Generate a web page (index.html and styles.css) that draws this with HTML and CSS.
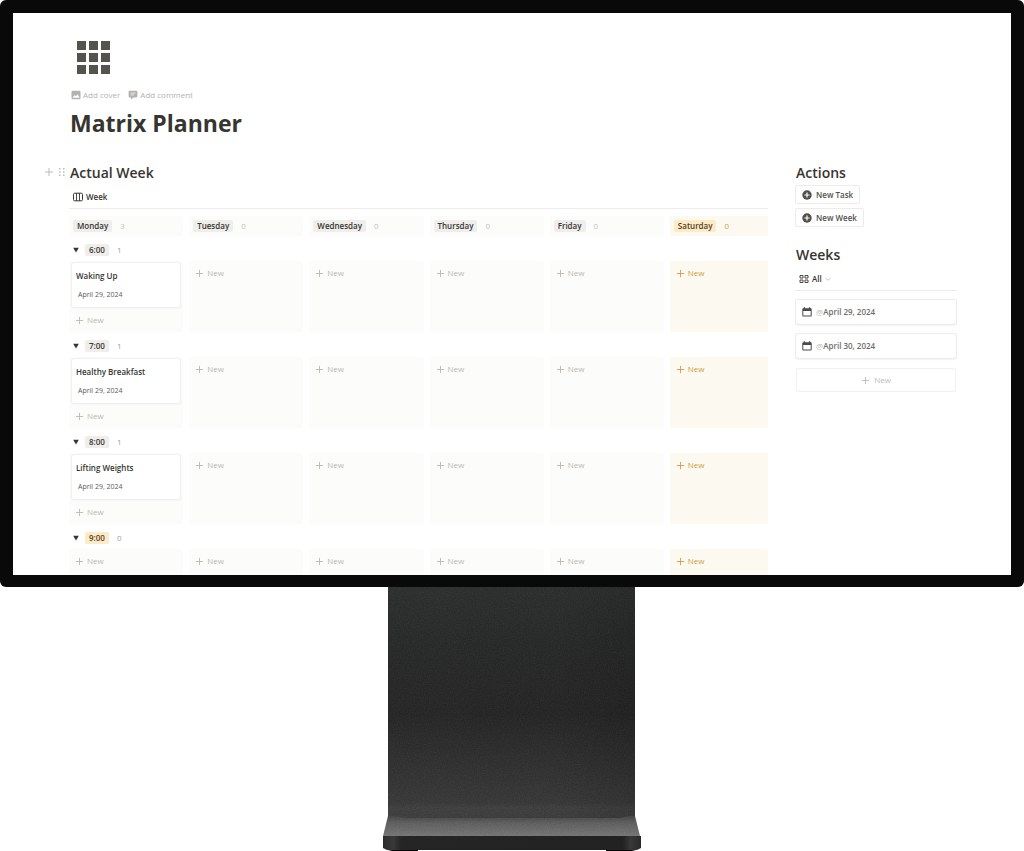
FILE: index.html
```
<!DOCTYPE html>
<html lang="en">
<head>
<meta charset="utf-8">
<meta name="viewport" content="width=device-width, initial-scale=1">
<title>Matrix Planner</title>
<link rel="stylesheet" href="styles.css">
</head>
<body>
<svg class="defs" width="0" height="0" aria-hidden="true">
  <symbol id="plus" viewBox="0 0 10 10"><path d="M5 1v8M1 5h8" fill="none" stroke="currentColor" stroke-width="1"/></symbol>
  <symbol id="circle-plus" viewBox="0 0 10 10"><circle cx="5" cy="5" r="4.7" fill="currentColor"/><path d="M5 2.4v5.2M2.4 5h5.2" stroke="#fff" stroke-width="1.2"/></symbol>
  <symbol id="calendar" viewBox="0 0 10 10"><path fill="currentColor" fill-rule="evenodd" d="M1.7.3h1.4v1h3.8v-1h1.4v1h.5c.5 0 .9.4.9.9v6.3c0 .5-.4.9-.9.9H1.2c-.5 0-.9-.4-.9-.9V2.200c0-.5.4-.9.9-.9h.5zM1.300 4v4.400h7.400V4z"/></symbol>
  <symbol id="triangle" viewBox="0 0 6 6"><path d="M.2.8h5.600L3 5.600z" fill="currentColor"/></symbol>
</svg>
<div class="monitor">
  <main class="screen">
    <header class="page-head">
      <svg class="page-icon" viewBox="0 0 33 33" aria-hidden="true"><path fill="#55534e" d="M0 0h9v9H0zM12 0h9v9h-9zM24 0h9v9h-9zM0 12h9v9H0zM12 12h9v9h-9zM24 12h9v9h-9zM0 24h9v9H0zM12 24h9v9h-9zM24 24h9v9h-9z"/></svg>
      <div class="page-tools">
        <button class="tool" type="button"><svg class="icon" viewBox="0 0 10 10" aria-hidden="true"><rect x=".5" y=".7" width="9" height="8.600" rx="1.200" fill="currentColor"/><path d="M1.500 7.700 3.700 4.900 5 6.300 6.600 4.200 8.600 7.700z" fill="#fff"/></svg>Add cover</button>
        <button class="tool" type="button"><svg class="icon" viewBox="0 0 10 10" aria-hidden="true"><path d="M1.800.8h6.400c.7 0 1.200.5 1.200 1.200v4.200c0 .7-.5 1.200-1.200 1.200H5.300L3 9.400v-2H1.800C1.100 7.400.6 6.900.6 6.200V2c0-.7.5-1.200 1.200-1.200z" fill="currentColor"/><path d="M2.600 3.100h4.800M2.600 4.900h3.400" stroke="#fff" stroke-width=".7"/></svg>Add comment</button>
      </div>
      <h1>Matrix Planner</h1>
    </header>
    <div class="columns">
      <section class="week">
        <div class="heading-row">
          <button class="handle" type="button" aria-label="Add block"><svg class="icon" aria-hidden="true"><use href="#plus"/></svg></button>
          <button class="handle" type="button" aria-label="Drag block"><svg class="grip" viewBox="0 0 6 10" aria-hidden="true"><path d="M0 1h1.500v1.500H0zM4 1h1.500v1.500H4zM0 4.200h1.500v1.500H0zM4 4.200h1.500v1.500H4zM0 7.400h1.500v1.500H0zM4 7.400h1.500v1.500H4z" fill="currentColor"/></svg></button>
          <h2>Actual Week</h2>
        </div>
        <div class="tabs"><button class="tab" type="button"><svg class="icon" viewBox="0 0 10 10" aria-hidden="true"><rect x=".5" y="1.200" width="9" height="7.600" rx="1.200" fill="none" stroke="currentColor"/><path d="M3.500 1.200v7.600M6.500 1.200v7.600" stroke="currentColor" stroke-width=".9"/></svg>Week</button></div>
        <div class="board">
          <div class="lane">
            <div class="day"><span class="tag">Monday</span><span class="count">3</span></div>
            <div class="day"><span class="tag">Tuesday</span><span class="count">0</span></div>
            <div class="day"><span class="tag">Wednesday</span><span class="count">0</span></div>
            <div class="day"><span class="tag">Thursday</span><span class="count">0</span></div>
            <div class="day"><span class="tag">Friday</span><span class="count">0</span></div>
            <div class="day gold"><span class="tag">Saturday</span><span class="count">0</span></div>
          </div>

          <div class="group"><button class="toggle" type="button" aria-label="Collapse 6:00"><svg class="tri" aria-hidden="true"><use href="#triangle"/></svg></button><span class="tag">6:00</span><span class="count">1</span></div>
          <div class="lane">
            <div class="cell"><article class="card"><h3>Waking Up</h3><p>April 29, 2024</p></article><button class="new" type="button"><svg class="icon" aria-hidden="true"><use href="#plus"/></svg>New</button></div>
            <div class="cell"><button class="new" type="button"><svg class="icon" aria-hidden="true"><use href="#plus"/></svg>New</button></div>
            <div class="cell"><button class="new" type="button"><svg class="icon" aria-hidden="true"><use href="#plus"/></svg>New</button></div>
            <div class="cell"><button class="new" type="button"><svg class="icon" aria-hidden="true"><use href="#plus"/></svg>New</button></div>
            <div class="cell"><button class="new" type="button"><svg class="icon" aria-hidden="true"><use href="#plus"/></svg>New</button></div>
            <div class="cell gold"><button class="new" type="button"><svg class="icon" aria-hidden="true"><use href="#plus"/></svg>New</button></div>
          </div>

          <div class="group"><button class="toggle" type="button" aria-label="Collapse 7:00"><svg class="tri" aria-hidden="true"><use href="#triangle"/></svg></button><span class="tag">7:00</span><span class="count">1</span></div>
          <div class="lane">
            <div class="cell"><article class="card"><h3>Healthy Breakfast</h3><p>April 29, 2024</p></article><button class="new" type="button"><svg class="icon" aria-hidden="true"><use href="#plus"/></svg>New</button></div>
            <div class="cell"><button class="new" type="button"><svg class="icon" aria-hidden="true"><use href="#plus"/></svg>New</button></div>
            <div class="cell"><button class="new" type="button"><svg class="icon" aria-hidden="true"><use href="#plus"/></svg>New</button></div>
            <div class="cell"><button class="new" type="button"><svg class="icon" aria-hidden="true"><use href="#plus"/></svg>New</button></div>
            <div class="cell"><button class="new" type="button"><svg class="icon" aria-hidden="true"><use href="#plus"/></svg>New</button></div>
            <div class="cell gold"><button class="new" type="button"><svg class="icon" aria-hidden="true"><use href="#plus"/></svg>New</button></div>
          </div>

          <div class="group"><button class="toggle" type="button" aria-label="Collapse 8:00"><svg class="tri" aria-hidden="true"><use href="#triangle"/></svg></button><span class="tag">8:00</span><span class="count">1</span></div>
          <div class="lane">
            <div class="cell"><article class="card"><h3>Lifting Weights</h3><p>April 29, 2024</p></article><button class="new" type="button"><svg class="icon" aria-hidden="true"><use href="#plus"/></svg>New</button></div>
            <div class="cell"><button class="new" type="button"><svg class="icon" aria-hidden="true"><use href="#plus"/></svg>New</button></div>
            <div class="cell"><button class="new" type="button"><svg class="icon" aria-hidden="true"><use href="#plus"/></svg>New</button></div>
            <div class="cell"><button class="new" type="button"><svg class="icon" aria-hidden="true"><use href="#plus"/></svg>New</button></div>
            <div class="cell"><button class="new" type="button"><svg class="icon" aria-hidden="true"><use href="#plus"/></svg>New</button></div>
            <div class="cell gold"><button class="new" type="button"><svg class="icon" aria-hidden="true"><use href="#plus"/></svg>New</button></div>
          </div>

          <div class="group amber"><button class="toggle" type="button" aria-label="Collapse 9:00"><svg class="tri" aria-hidden="true"><use href="#triangle"/></svg></button><span class="tag">9:00</span><span class="count">0</span></div>
          <div class="lane last">
            <div class="cell"><button class="new" type="button"><svg class="icon" aria-hidden="true"><use href="#plus"/></svg>New</button></div>
            <div class="cell"><button class="new" type="button"><svg class="icon" aria-hidden="true"><use href="#plus"/></svg>New</button></div>
            <div class="cell"><button class="new" type="button"><svg class="icon" aria-hidden="true"><use href="#plus"/></svg>New</button></div>
            <div class="cell"><button class="new" type="button"><svg class="icon" aria-hidden="true"><use href="#plus"/></svg>New</button></div>
            <div class="cell"><button class="new" type="button"><svg class="icon" aria-hidden="true"><use href="#plus"/></svg>New</button></div>
            <div class="cell gold"><button class="new" type="button"><svg class="icon" aria-hidden="true"><use href="#plus"/></svg>New</button></div>
          </div>
        </div>
      </section>

      <aside class="side">
        <h2>Actions</h2>
        <div class="actions">
          <button class="action" type="button"><svg class="icon" aria-hidden="true"><use href="#circle-plus"/></svg>New Task</button>
          <button class="action" type="button"><svg class="icon" aria-hidden="true"><use href="#circle-plus"/></svg>New Week</button>
        </div>
        <h2>Weeks</h2>
        <div class="tabs"><button class="tab" type="button"><svg class="icon" viewBox="0 0 10 10" aria-hidden="true"><path d="M1 1.500h3v2.500H1zM6 1.500h3v2.500H6zM1 6h3v2.500H1zM6 6h3v2.500H6z" fill="none" stroke="currentColor" stroke-width=".9" stroke-linejoin="round"/></svg>All<svg class="chevron" viewBox="0 0 6 6" aria-hidden="true"><path d="M.5 2 3 4.300 5.500 2" fill="none" stroke="#b5b4b1" stroke-width=".8"/></svg></button></div>
        <div class="entries">
          <a class="entry" href="#week-29"><svg class="icon" aria-hidden="true"><use href="#calendar"/></svg><span><span class="at">@</span>April 29, 2024</span></a>
          <a class="entry" href="#week-30"><svg class="icon" aria-hidden="true"><use href="#calendar"/></svg><span><span class="at">@</span>April 30, 2024</span></a>
          <button class="entry-new" type="button"><svg class="icon" aria-hidden="true"><use href="#plus"/></svg>New</button>
        </div>
      </aside>
    </div>
  </main>
</div>
<svg class="stand" viewBox="0 0 260 264" preserveAspectRatio="none" aria-hidden="true">
  <defs>
    <linearGradient id="neck" x1="0" y1="0" x2="0" y2="1">
      <stop offset="0" stop-color="#2f3030"/><stop offset=".25" stop-color="#292a2a"/><stop offset=".55" stop-color="#272727"/><stop offset=".8" stop-color="#343434"/><stop offset=".93" stop-color="#3b3b3b"/><stop offset=".95" stop-color="#424242"/><stop offset="1" stop-color="#404040"/>
    </linearGradient>
    <linearGradient id="shade" x1="0" y1="0" x2="1" y2="0">
      <stop offset="0" stop-color="#000" stop-opacity="0"/><stop offset=".7" stop-color="#000" stop-opacity=".03"/><stop offset="1" stop-color="#000" stop-opacity=".14"/>
    </linearGradient>
    <linearGradient id="foot" x1="0" y1="0" x2="0" y2="1">
      <stop offset="0" stop-color="#464646"/><stop offset=".35" stop-color="#636363"/><stop offset="1" stop-color="#7b7b7b"/>
    </linearGradient>
    <linearGradient id="edge" x1="0" y1="0" x2="1" y2="0">
      <stop offset="0" stop-color="#2c2c2c"/><stop offset=".04" stop-color="#383838"/><stop offset=".07" stop-color="#252525"/><stop offset=".93" stop-color="#222"/><stop offset=".96" stop-color="#383838"/><stop offset="1" stop-color="#292929"/>
    </linearGradient>
    <filter id="grain" x="0" y="0" width="1" height="1" color-interpolation-filters="sRGB"><feTurbulence type="fractalNoise" baseFrequency=".8" numOctaves="2"/><feColorMatrix values="1 0 0 0 -.25  1 0 0 0 -.25  1 0 0 0 -.25  0 0 0 0 1"/><feComposite in2="SourceGraphic" operator="in"/></filter>
  </defs>
  <path d="M6 0h247v232H6z" fill="url(#neck)"/>
  <path d="M6 0h247v232H6z" fill="url(#shade)"/>
  <path d="M6 229Q12 228 22 231H238Q248 228 253 229L258 249H1z" fill="url(#foot)"/>
  <path d="M6 0h247v229l5 20H1l5-20z" filter="url(#grain)" opacity=".07"/>
  <path d="M1 249h258v12l-4 2H5l-4-2z" fill="url(#edge)"/>
  <path d="M6 263h30v1H10zM224 263h30l-4 1h-26z" fill="#080606"/>
</svg>
</body>
</html>
```
FILE: styles.css
```
* { box-sizing: border-box; }
body {
  margin: 0;
  background: #fff;
  color: #37352f;
  font-family: "Open Sans", "Noto Sans", sans-serif;
  font-size: 8px;
  line-height: 12px;
}
h1, h2, h3, p { margin: 0; }
button {
  margin: 0;
  padding: 0;
  border: 0;
  background: none;
  color: inherit;
  font: inherit;
  cursor: pointer;
}
.defs { position: absolute; }
.icon { width: 10px; height: 10px; flex: none; }

.monitor {
  padding: 13px 13px 12px;
  background: #090909;
  border-radius: 6px;
}
.screen {
  padding: 28px 54px 0 56px;
  background: #fff;
  overflow: hidden;
}
.page-icon { display: block; width: 33px; height: 33px; margin-left: 8px; }
.page-tools { display: flex; gap: 8px; margin: 15px 0 0 2px; color: #b3b2af; }
.tool { display: flex; align-items: center; gap: 2px; }
h1 { margin-top: 6px; padding-left: 1px; font-size: 23px; line-height: 32px; font-weight: 700; }

.columns { display: flex; gap: 27px; margin-top: 24px; }
.week { flex: 1; min-width: 0; }
.side { flex: 0 0 162px; }
h2 { padding-left: 1px; font-size: 14px; line-height: 20px; font-weight: 600; }
.heading-row { display: flex; align-items: center; margin-left: -25px; }
.handle { display: flex; padding-bottom: 2px; color: #bcbbb8; }
.handle + .handle { margin: 0 4px 0 5px; }
.grip { width: 6px; height: 10px; }

.tabs { display: flex; height: 26px; padding-top: 2px; align-items: center; border-bottom: 1px solid #ececeb; }
.tab { display: flex; align-items: center; gap: 3px; padding-left: 4px; font-weight: 600; }
.chevron { width: 6px; height: 6px; }

.board { padding-top: 7px; }
.lane { display: grid; grid-template-columns: repeat(5, 114fr) 98fr; gap: 6px; }
.day, .cell { background: #fcfcfb; border-radius: 2px; }
.day { display: flex; align-items: center; gap: 8px; height: 20px; padding-left: 4px; }
.tag { padding: 0 4px; border-radius: 2px; background: #efeeec; font-weight: 600; }
.count { color: #a09f9c; }
.day .count { color: #c5c4c2; }
.day.gold, .cell.gold { background: #fcf9f1; border-radius: 2px 0 0 2px; }
.gold .tag, .amber .tag { background: #fdebc8; color: #51401f; }
.day.gold .count, .gold .new { color: #d19d46; }

.group { display: flex; align-items: center; gap: 8px; height: 25px; padding: 2px 0 0 4px; }
.toggle { display: flex; }
.group .toggle { margin-right: -2px; }
.tri { width: 6px; height: 6px; }
.cell { min-height: 71px; padding: 2px 3px; }
.card {
  padding: 7px 5px 6px 4px;
  border-radius: 2px;
  background: #fff;
  box-shadow: 0 0 0 1px #f0f0ef, 0 1px 2px #e4e4e3;
}
.card h3 { font-size: 8px; line-height: 12px; font-weight: 600; }
.card p { margin-top: 7px; padding-left: 2px; font-size: 7px; line-height: 12px; color: #5c5a55; }
.new { display: flex; align-items: center; gap: 3px; padding: 4px 3px; color: #bab9b6; }
.card + .new { padding-top: 7px; }
.last .cell { min-height: 26px; border-radius: 2px 2px 0 0; }
.new .icon, .entry-new .icon { width: 9px; height: 9px; }

.actions { display: flex; flex-direction: column; align-items: flex-start; gap: 4px; margin: 2px 0 18px; }
.action {
  display: flex;
  align-items: center;
  gap: 4px;
  height: 19px;
  padding: 0 6px;
  border: 1px solid #ececeb;
  border-radius: 2px;
  font-weight: 600;
  color: #52504b;
}
.entries { display: flex; flex-direction: column; gap: 10px; padding: 9px 1px 0; }
.entry, .entry-new { display: flex; align-items: center; height: 24px; border-radius: 2px; }
.entry {
  gap: 4px;
  padding-left: 6px;
  box-shadow: 0 0 0 1px #ececeb, 0 1px 2px #d8d8d7;
  color: #6f6d68;
  font-weight: 600;
  text-decoration: none;
}
.entry .icon { color: #4c4a45; }
.at { color: #bdbcb9; font-weight: 400; }
.entry-new { justify-content: center; gap: 4px; border: 1px solid #f1f1f0; color: #bdbcb9; }

.stand { display: block; width: 260px; height: 264px; margin: 0 auto; }
```
